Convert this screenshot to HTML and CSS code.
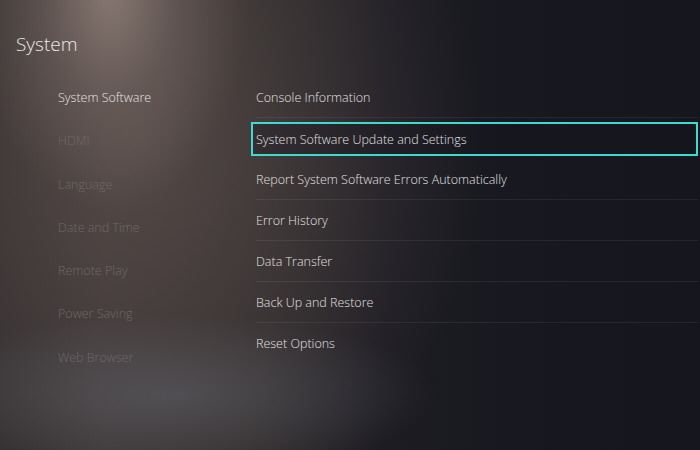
FILE: index.html
```html
<!DOCTYPE html>
<html lang="en">
<head>
    <meta charset="UTF-8">
    <meta name="viewport" content="width=device-width, initial-scale=1.0">
    <title>System</title>
    <link rel="stylesheet" href="styles.css">
</head>
<body>
    <div class="screen">
        <header class="page-header">
            <h1 class="page-title">System</h1>
        </header>

        <div class="settings">
            <ul class="category-list">
                <li class="category active">System Software</li>
                <li class="category">HDMI</li>
                <li class="category">Language</li>
                <li class="category">Date and Time</li>
                <li class="category">Remote Play</li>
                <li class="category">Power Saving</li>
                <li class="category">Web Browser</li>
            </ul>

            <ul class="option-list">
                <li class="option"><span class="option-label">Console Information</span></li>
                <li class="option focused"><span class="option-label">System Software Update and Settings</span></li>
                <li class="option"><span class="option-label">Report System Software Errors Automatically</span></li>
                <li class="option"><span class="option-label">Error History</span></li>
                <li class="option"><span class="option-label">Data Transfer</span></li>
                <li class="option"><span class="option-label">Back Up and Restore</span></li>
                <li class="option last"><span class="option-label">Reset Options</span></li>
            </ul>
        </div>
    </div>
</body>
</html>
```

FILE: styles.css
```css
* {
    margin: 0;
    padding: 0;
    box-sizing: border-box;
}

:root {
    --focus-color: #3fd9d2;
    --text-color: #e2e0e0;
    --dim-color: #6e6867;
    --line-color: rgba(255, 255, 255, 0.07);
}

html, body {
    width: 700px;
    height: 450px;
    overflow: hidden;
}

body {
    font-family: "Open Sans", "Noto Sans", sans-serif;
    font-weight: 300;
    color: var(--text-color);
    background-color: #17171f;
    background-image:
        radial-gradient(ellipse 140px 220px at 110px -10px, rgba(175, 155, 145, 0.6) 0%, rgba(170, 150, 140, 0.22) 50%, transparent 100%),
        radial-gradient(ellipse 270px 80px at 170px 395px, rgba(105, 110, 120, 0.42) 0%, transparent 100%),
        radial-gradient(ellipse 340px 430px at 140px 140px, rgba(110, 95, 90, 0.55) 0%, transparent 100%),
        linear-gradient(90deg, #2e2a2b 0%, #363132 15%, #2d292a 35%, #1d1c23 55%, #16171f 80%, #15161e 100%);
}

.screen {
    height: 100%;
}

/* header */
.page-header {
    height: 77px;
    padding: 30px 16px 0;
}

.page-title {
    font-size: 19px;
    font-weight: 300;
    line-height: 28px;
    color: #ebe9e8;
}

/* two columns */
.settings {
    display: grid;
    grid-template-columns: 251px 447px;
}

.category-list,
.option-list {
    list-style: none;
}

.category-list {
    padding-left: 58px;
    margin-top: -1px;
}

.category {
    height: 43.3px;
    line-height: 43.3px;
    font-size: 12.5px;
    color: var(--dim-color);
}

.category.active {
    color: #e6e4e3;
}

/* option rows */
.option {
    height: 41px;
    display: flex;
    padding-left: 5px;
    font-size: 12.5px;
}

.option-label {
    flex: 1;
    display: flex;
    align-items: center;
    border-bottom: 1px solid var(--line-color);
}

.option.last .option-label {
    border-bottom: none;
}

.option.focused {
    padding: 4px 0 3px 0;
}

.option.focused .option-label {
    border: 2px solid var(--focus-color);
    padding-left: 3px;
    background: rgba(20, 20, 28, 0.35);
}
```
